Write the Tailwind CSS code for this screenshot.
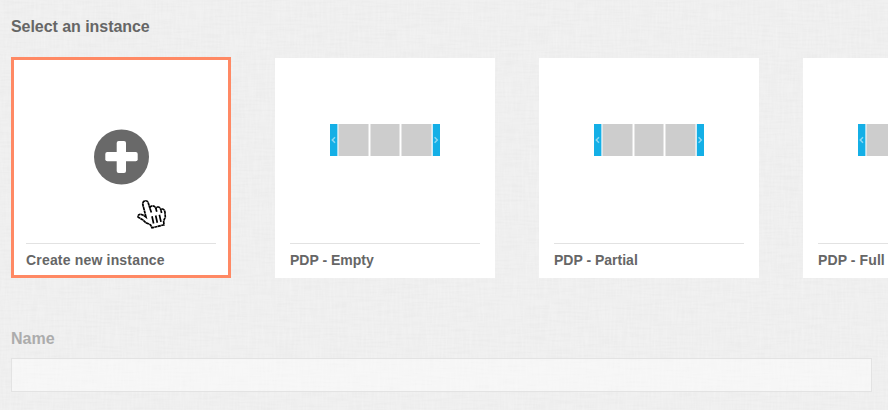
<!DOCTYPE html>
<html lang="en">
<head>
<meta charset="utf-8">
<title>Select an instance</title>
<script src="https://cdn.jsdelivr.net/npm/@tailwindcss/browser@4"></script>
</head>
<body class="relative isolate h-[410px] w-[888px] overflow-hidden bg-[#efefef] font-['Liberation_Sans',Arial,sans-serif] font-bold text-[#666]">
<!-- Linen background -->
<svg class="absolute inset-0 -z-10 h-full w-full" aria-hidden="true">
  <filter id="weft" x="0" y="0" width="100%" height="100%" color-interpolation-filters="sRGB"><feTurbulence type="fractalNoise" baseFrequency="0.04 0.5" numOctaves="2" seed="3"/><feColorMatrix values="0 0 0 0 0.4  0 0 0 0 0.4  0 0 0 0 0.4  0.06 0 0 0 -0.023"/></filter>
  <filter id="warp" x="0" y="0" width="100%" height="100%" color-interpolation-filters="sRGB"><feTurbulence type="fractalNoise" baseFrequency="0.5 0.04" numOctaves="2" seed="8"/><feColorMatrix values="0 0 0 0 1  0 0 0 0 1  0 0 0 0 1  0.36 0 0 0 -0.13"/></filter>
  <rect width="100%" height="100%" filter="url(#weft)"/>
  <rect width="100%" height="100%" filter="url(#warp)"/>
</svg>
<svg class="hidden" aria-hidden="true">
  <symbol id="carousel" viewBox="0 0 110 32">
    <path fill="#e5e5e5" d="M8 0h31v32H8zM40 0h30v32H40zM71 0h31v32H71z"/>
    <path fill="#cdcdcd" d="M9 0h29v32H9zM41 0h28v32H41zM72 0h29v32H72z"/>
    <path fill="#14afe6" d="M0 0h7.4v32H0zM102.8 0h7.2v32h-7.2z"/>
    <path fill="none" stroke="#8bd7f2" stroke-width="1.5" d="M5 13.2 2.3 16 5 18.8M104.6 13.2l2.7 2.8-2.7 2.8"/>
  </symbol>
</svg>
<main class="flex flex-col pl-[11px] pt-[17px]">
  <h1 class="h-5 text-[16px] leading-5 tracking-[-0.05px]">Select an instance</h1>
  <section class="mt-5 flex gap-11 overflow-hidden">
    <article class="flex h-[221px] w-[220px] shrink-0 flex-col border-3 border-[#ff8964] bg-white px-3">
      <div class="relative flex h-[184px] shrink-0 justify-center border-b border-[#e2e2e2] pt-[69px]">
        <svg class="h-[56px] w-[56px]" viewBox="0 0 56 56"><circle cx="28.5" cy="28" r="27.5" fill="#696969"/><rect x="23.7" y="12" width="9.3" height="32" rx="2" fill="#fff"/><rect x="12.3" y="23" width="32.4" height="9.3" rx="2" fill="#fff"/></svg>
        <svg class="absolute left-[104px] top-[135px] h-10 w-11" viewBox="0 0 44 40" fill="#fff" stroke="#000" stroke-width="1.7">
          <path stroke-dasharray="3.2 .35" d="M16 22 12.8 9.5Q12.5 6.5 15 5.8 17.8 5.5 18.3 8L20 13.5Q20 11 22.5 10.8 25 10.8 26 14 26 11.8 28.5 12 30.3 12.5 31 15.5 31 13.8 32.8 14 34.5 14.5 35 17.5L35.3 22 33.6 26 34 29.8 22 32.8 20.5 29.8 16 27.8 13 25 8.2 22.3Q7.5 19.8 10 19.3 12 19 16 22Z"/>
          <path fill="none" d="M20 13.5l1.4 4M26 14l.8 2.8M31 15.5l.6 2.5M22 21.3l1.6 7.2M25.7 20.5l1.6 7.2M29.4 19.7l1.6 7.2"/>
        </svg>
      </div>
      <h2 class="mt-[6px] whitespace-nowrap text-[14px] leading-5 tracking-[0.18px]">Create new instance</h2>
    </article>
    <article class="mt-px flex h-[220px] w-[220px] shrink-0 flex-col bg-white px-[15px]">
      <div class="flex h-[186px] shrink-0 justify-center border-b border-[#e2e2e2] pt-[66px]"><svg class="h-8 w-[110px]"><use href="#carousel"/></svg></div>
      <h2 class="mt-[6px] whitespace-nowrap text-[14px] leading-5">PDP - Empty</h2>
    </article>
    <article class="mt-px flex h-[220px] w-[220px] shrink-0 flex-col bg-white px-[15px]">
      <div class="flex h-[186px] shrink-0 justify-center border-b border-[#e2e2e2] pt-[66px]"><svg class="h-8 w-[110px]"><use href="#carousel"/></svg></div>
      <h2 class="mt-[6px] whitespace-nowrap text-[14px] leading-5">PDP - Partial</h2>
    </article>
    <article class="mt-px flex h-[220px] w-[220px] shrink-0 flex-col bg-white px-[15px]">
      <div class="flex h-[186px] shrink-0 justify-center border-b border-[#e2e2e2] pt-[66px]"><svg class="h-8 w-[110px]"><use href="#carousel"/></svg></div>
      <h2 class="mt-[6px] whitespace-nowrap text-[14px] leading-5 tracking-[0.1px]">PDP - Full</h2>
    </article>
  </section>
  <label for="name" class="mt-[51px] h-5 text-[16px] leading-5 text-[#acacac]">Name</label>
  <input id="name" disabled class="mt-[9px] h-[34px] w-[861px] border border-[#e3e3e3] bg-white/45">
</main>
</body>
</html>
